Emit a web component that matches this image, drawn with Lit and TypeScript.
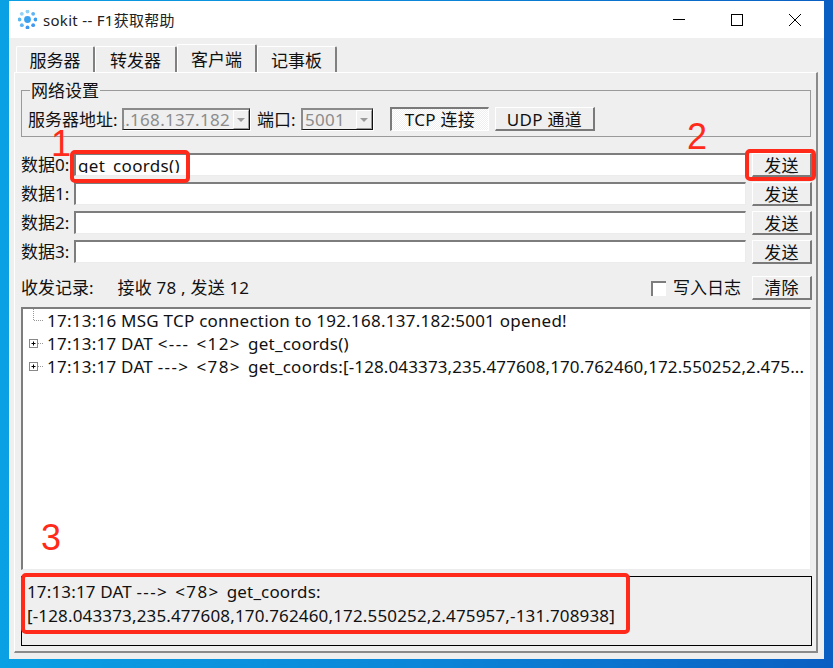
import { LitElement, html, css, svg } from "lit";
import { customElement } from "lit/decorators.js";

const FONT = css`"Noto Sans", "Noto Sans CJK SC", sans-serif`;

@customElement("app-root")
export class AppRoot extends LitElement {
  static styles = css`
    :host {
      display: block;
      width: 833px;
      height: 668px;
      overflow: hidden;
      position: relative;
      font-family: ${FONT};
      font-size: 17px;
      color: #111;
      background: linear-gradient(90deg, #0aa0e4 0%, #0b86d8 50%, #0a5fc2 100%);
    }
    * { box-sizing: border-box; }
    .window {
      position: absolute;
      left: 9px; top: 1px;
      width: 815px; height: 658px;
      background: #efefef;
      display: flex;
      flex-direction: column;
    }
    .title {
      height: 37px;
      flex: none;
      background: #fff;
      display: flex;
      align-items: center;
      padding-left: 9px;
      font-size: 15px;
      letter-spacing: 0.3px;
      color: #222;
    }
    .title svg.logo { width: 19px; height: 19px; margin-right: 6px; }
    .title .name { flex: 1; }
    .ctl { width: 58px; height: 37px; display: flex; align-items: center; justify-content: center; }
    .ctl svg { width: 14px; height: 14px; }
    .tabs {
      display: flex;
      align-items: flex-end;
      height: 34px;
      flex: none;
      padding-left: 7px;
    }
    .tab {
      height: 26px;
      width: 80px;
      display: flex;
      align-items: center;
      justify-content: center;
      border-top: 1px solid #fff;
      border-left: 1px solid #fff;
      border-right: 2px solid #808080;
      border-radius: 2px 2px 0 0;
    }
    .tab.t1 { width: 79px; }
    .tab.t2 { width: 82px; }
    .tab.active { height: 28px; width: 80px; }
    .panel {
      margin-left: 5px;
      width: 804px;
      height: 581px;
      flex: none;
      border-top: 1px solid #fff;
      border-left: 1px solid #fff;
      border-right: 2px solid #8a8a8a;
      border-bottom: 2px solid #8a8a8a;
      padding: 17px 4px 0 6px;
      display: flex;
      flex-direction: column;
    }
    .group {
      position: relative;
      height: 47px;
      width: 790px;
      border: 1px solid #9a9a9a;
      padding: 16px 0 0 6px;
      display: flex;
      align-items: flex-start;
      flex: none;
    }
    .legend {
      position: absolute;
      left: 8px; top: -10px;
      padding: 0 1px;
      background: #efefef;
      line-height: 20px;
    }
    .lbl { line-height: 24px; white-space: nowrap; }
    .lbl.addr { width: 90px; line-height: 26px; }
    .lbl.prt { width: 40px; margin-left: 7px; line-height: 26px; }
    .combo {
      height: 22px;
      margin-top: 1px;
      border-top: 2px solid #8a8a8a;
      border-left: 2px solid #8a8a8a;
      border-right: 1px solid #111;
      border-bottom: 1px solid #111;
      box-shadow: 1px 1px 0 #fff;
      display: flex;
      color: #8c8c8c;
      margin-left: 4px;
      letter-spacing: 0.3px;
    }
    .combo .val {
      flex: 1;
      min-width: 0;
      display: flex;
      overflow: hidden;
      line-height: 20px;
      white-space: nowrap;
    }
    .combo .val.end { justify-content: flex-end; padding-right: 3px; }
    .combo .val.start { padding-left: 2px; }
    .combo .arrow {
      width: 16px;
      flex: none;
      background: #f0f0f0;
      border-top: 1px solid #fff;
      border-left: 1px solid #fff;
      border-right: 1px solid #9a9a9a;
      border-bottom: 1px solid #9a9a9a;
      display: flex;
      align-items: center;
      justify-content: center;
    }
    .tri { width: 0; height: 0; border-left: 4px solid transparent; border-right: 4px solid transparent; border-top: 4px solid #9a9a9a; }
    .ip { width: 128px; }
    .port { width: 72px; }
    .btn {
      height: 24px;
      background: #efefef;
      border-top: 1px solid #fff;
      border-left: 1px solid #fff;
      border-right: 2px solid #7a7a7a;
      border-bottom: 2px solid #7a7a7a;
      display: flex;
      align-items: center;
      justify-content: center;
      flex: none;
      white-space: nowrap;
      letter-spacing: 0.3px;
    }
    .btn.pressed {
      border-top: 2px solid #7a7a7a;
      border-left: 2px solid #7a7a7a;
      border-right: 1px solid #fff;
      border-bottom: 1px solid #fff;
      padding-bottom: 2px;
      background: repeating-conic-gradient(#fff 0 25%, #efefef 0 50%) 0 0 / 2px 2px;
    }
    .tcp { width: 99px; margin-left: 17px; }
    .udp { width: 100px; margin-left: 6px; }
    .rows { margin-top: 16px; display: flex; flex-direction: column; gap: 5px; flex: none; }
    .row { display: flex; height: 24px; align-items: flex-start; }
    .row .lbl { width: 53px; flex: none; }
    .input {
      width: 672px;
      height: 23px;
      flex: none;
      background: #fff;
      border-top: 2px solid #7d7d7d;
      border-left: 2px solid #7d7d7d;
      border-right: 1px solid #ececec;
      border-bottom: 1px solid #ececec;
      padding-left: 2px;
    }
    .input .clip {
      height: 18px;
      overflow: hidden;
      line-height: 22px;
      white-space: nowrap;
      letter-spacing: 0.33px;
    }
    .send { width: 60px; margin-left: 6px; }
    .status { margin-top: 12px; height: 24px; display: flex; align-items: center; flex: none; }
    .status > span { padding-bottom: 3px; }
    .status .clear { padding-bottom: 2px; }
    .count { margin-left: 24px; flex: 1; letter-spacing: 0.2px; }
    .check {
      width: 15px; height: 15px;
      background: #fff;
      border-top: 2px solid #7d7d7d;
      border-left: 2px solid #7d7d7d;
      margin-right: 7px;
    }
    .clear { width: 60px; margin-left: 11px; }
    .tree {
      margin-top: 7px;
      height: 263px;
      width: 790px;
      flex: none;
      background: #fff;
      border-top: 2px solid #7d7d7d;
      border-left: 2px solid #7d7d7d;
      border-right: 1px solid #ececec;
      border-bottom: 1px solid #ececec;
      overflow: hidden;
    }
    .node { height: 23px; line-height: 23px; display: flex; white-space: nowrap; letter-spacing: 0.245px; }
    .node svg { width: 24px; height: 23px; flex: none; }
    .arr { letter-spacing: 1.4px; word-spacing: 1.2px; }
    .data { letter-spacing: 0.12px; }
    .bottom {
      margin-top: 6px;
      width: 791px;
      height: 70px;
      flex: none;
      border: 1px solid #000;
      padding: 3px 0 0 5px;
      line-height: 24px;
      white-space: nowrap;
      letter-spacing: 0.15px;
    }
    .mark { position: absolute; border: 4px solid #ff2a1a; border-radius: 5px; }
    .m1 { left: 70px; top: 150px; width: 120px; height: 33px; }
    .m2 { left: 745px; top: 149px; width: 71px; height: 32px; }
    .m3 { left: 21px; top: 573px; width: 609px; height: 61px; }
    .num { position: absolute; color: #ff2a1a; font-family: "Liberation Sans", sans-serif; font-size: 36px; line-height: 36px; }
    .n1 { left: 51px; top: 126px; }
    .n2 { left: 687px; top: 119px; }
    .n3 { left: 41px; top: 520px; }
  `;

  private logo() {
    const colors = ["#3f9fee", "#3f97ee", "#3f97ee", "#5cb2f2", "#5cb8f2", "#8fd0f5", "#8fd0f5", "#5cb2f2"];
    const dots = colors.map((c, i) => {
      const a = (i / 8) * Math.PI * 2;
      return svg`<circle cx=${9.5 + Math.cos(a) * 8} cy=${9.5 + Math.sin(a) * 8} r="1.9" fill=${c}></circle>`;
    });
    return html`<svg class="logo" viewBox="0 0 19 19">${dots}<circle cx="9.5" cy="9.5" r="3.4" fill="#3ba2f0"></circle></svg>`;
  }

  private expander(plus: boolean) {
    return html`<svg viewBox="0 0 24 23">
      ${plus
        ? svg`<path d="M15 11.5H21" stroke="#999" stroke-dasharray="1 1" fill="none"></path>
              <rect x="6.5" y="7.5" width="8" height="8" fill="#fff" stroke="#888"></rect>
              <path d="M8.5 11.5h4M10.5 9.5v4" stroke="#000" fill="none"></path>`
        : svg`<path d="M10.5 0V11.5H20" stroke="#999" stroke-dasharray="1 1" fill="none"></path>`}
    </svg>`;
  }

  render() {
    return html`
      <div class="window">
        <div class="title">
          ${this.logo()}
          <span class="name">sokit -- F1获取帮助</span>
          <div class="ctl"><svg viewBox="0 0 14 14"><path d="M1 6.5H13" stroke="#000" fill="none"></path></svg></div>
          <div class="ctl"><svg viewBox="0 0 14 14"><rect x="1.5" y="1.5" width="11" height="11" fill="none" stroke="#000"></rect></svg></div>
          <div class="ctl"><svg viewBox="0 0 14 14"><path d="M1 1L13 13M13 1L1 13" stroke="#000" fill="none"></path></svg></div>
        </div>
        <div class="tabs">
          <div class="tab t1">服务器</div>
          <div class="tab t2">转发器</div>
          <div class="tab active">客户端</div>
          <div class="tab">记事板</div>
        </div>
        <div class="panel">
          <div class="group">
            <div class="legend">网络设置</div>
            <span class="lbl addr">服务器地址:</span>
            <div class="combo ip"><div class="val end">192.168.137.182</div><div class="arrow"><div class="tri"></div></div></div>
            <span class="lbl prt">端口:</span>
            <div class="combo port"><div class="val start">5001</div><div class="arrow"><div class="tri"></div></div></div>
            <div class="btn pressed tcp">TCP 连接</div>
            <div class="btn udp">UDP 通道</div>
          </div>
          <div class="rows">
            ${["get_coords()", "", "", ""].map(
              (v, i) => html`<div class="row">
                <span class="lbl">数据${i}:</span>
                <div class="input"><div class="clip">${v}</div></div>
                <div class="btn send">发送</div>
              </div>`
            )}
          </div>
          <div class="status">
            <span>收发记录:</span>
            <span class="count">接收 78 , 发送 12</span>
            <div class="check"></div>
            <span>写入日志</span>
            <div class="btn clear">清除</div>
          </div>
          <div class="tree">
            <div class="node">${this.expander(false)}<span>17:13:16 MSG TCP connection to 192.168.137.182:5001 opened!</span></div>
            <div class="node">${this.expander(true)}<span>17:13:17 DAT <span class="arr">&lt;--- &lt;12&gt; </span>get_coords()</span></div>
            <div class="node">${this.expander(true)}<span>17:13:17 DAT <span class="arr">---&gt; &lt;78&gt; </span>get_coords:<span class="data">[-128.043373,235.477608,170.762460,172.550252,2.475...</span></span></div>
          </div>
          <div class="bottom">17:13:17 DAT <span class="arr">---&gt; &lt;78&gt; </span>get_coords:<br />[-128.043373,235.477608,170.762460,172.550252,2.475957,-131.708938]</div>
        </div>
      </div>
      <div class="mark m1"></div>
      <div class="mark m2"></div>
      <div class="mark m3"></div>
      <div class="num n1">1</div>
      <div class="num n2">2</div>
      <div class="num n3">3</div>
    `;
  }
}
